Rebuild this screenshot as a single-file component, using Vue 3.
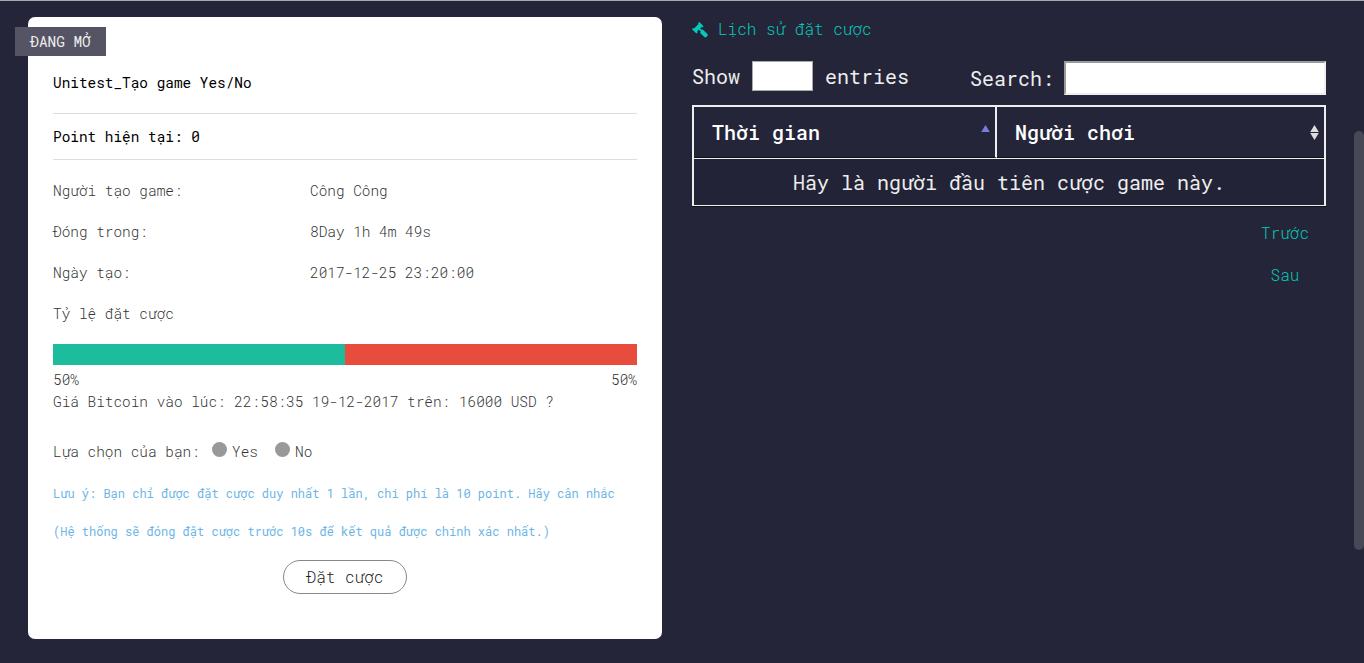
<script setup>
import { ref } from 'vue'

const details = [
  { label: 'Người tạo game:', value: 'Công Công' },
  { label: 'Đóng trong:', value: '8Day 1h 4m 49s' },
  { label: 'Ngày tạo:', value: '2017-12-25 23:20:00' },
  { label: 'Tỷ lệ đặt cược', value: '' },
]
const yesShare = 50
const choices = ['Yes', 'No']
const picked = ref('')
const query = ref('')
</script>

<template>
  <main class="page">
    <section class="card">
      <span class="badge">ĐANG MỞ</span>
      <h1 class="title">Unitest_Tạo game Yes/No</h1>
      <p class="points">Point hiện tại: 0</p>
      <dl class="details">
        <div v-for="row in details" :key="row.label" class="detail">
          <dt>{{ row.label }}</dt>
          <dd>{{ row.value }}</dd>
        </div>
      </dl>
      <div class="ratio">
        <div class="ratio-yes" :style="{ width: yesShare + '%' }"></div>
      </div>
      <div class="ratio-labels">
        <span>{{ yesShare }}%</span><span>{{ 100 - yesShare }}%</span>
      </div>
      <p class="question">Giá Bitcoin vào lúc: 22:58:35 19-12-2017 trên: 16000 USD ?</p>
      <div class="choices">
        <span class="choices-label">Lựa chọn của bạn:</span>
        <label v-for="c in choices" :key="c" class="choice" @click="picked = c">
          <i class="dot"></i>{{ c }}
        </label>
      </div>
      <p class="note">Lưu ý: Bạn chỉ được đặt cược duy nhất 1 lần, chi phí là 10 point. Hãy cân nhắc</p>
      <p class="note">(Hệ thống sẽ đóng đặt cược trước 10s để kết quả được chính xác nhất.)</p>
      <button class="bet">Đặt cược</button>
    </section>

    <section class="history">
      <h2 class="heading">
        <svg class="gavel" viewBox="0 0 16 16" aria-hidden="true">
          <path d="M0 7.2 L1.2 6 L2 6.4 L6.5 2 L6.1 1.2 L7.3 0 L11.5 4.2 L10.3 5.4 L9.5 5 L8.2 6.3 L10 8.1 L10.8 7.5 L15.4 12 Q16.2 13 15.4 14 L14.3 15.1 Q13.4 15.9 12.4 15.1 L8.2 10.9 L8.7 9.4 L6.9 7.6 L5.2 9.3 L5.6 10.2 L4.4 11.4 Z" />
        </svg>
        <span>Lịch sử đặt cược</span>
      </h2>
      <div class="controls">
        <div class="length">Show<span class="select"></span>entries</div>
        <label class="search">Search:<input v-model="query" type="text" class="search-input"></label>
      </div>
      <div class="table">
        <div class="thead">
          <div class="th">Thời gian<svg class="sort asc" viewBox="0 0 9 16"><path d="M4.5 0 L8.8 7 H0.2 Z" /></svg></div>
          <div class="th">Người chơi<svg class="sort" viewBox="0 0 9 16"><path d="M4.5 0 L8.8 7 H0.2 Z M0.2 8 H8.8 L4.5 15 Z" /></svg></div>
        </div>
        <div class="empty">Hãy là người đầu tiên cược game này.</div>
      </div>
      <nav class="pager">
        <a>Trước</a>
        <a>Sau</a>
      </nav>
    </section>
    <div class="scroll-thumb"></div>
  </main>
</template>

<style>
body {
  background: #25253a;
  overflow: hidden;
}
</style>

<style scoped>
* {
  box-sizing: border-box;
}
.page {
  position: relative;
  display: flex;
  gap: 30px;
  align-items: flex-start;
  height: 663px;
  padding: 16px 38px 0 28px;
  border-top: 1px solid #a9a9ad;
  background: #25253a;
  font-family: "Roboto Mono", "Liberation Mono", monospace;
  font-size: 14.4px;
  font-weight: 300;
  color: #333;
}
h1, h2, p, dl, dd {
  margin: 0;
  font-weight: inherit;
}
.card {
  position: relative;
  display: flex;
  flex-direction: column;
  width: 634px;
  height: 622px;
  padding: 36px 25px 0;
  border-radius: 7px;
  background: #fff;
}
.badge {
  position: absolute;
  left: -13px;
  top: 10px;
  width: 91px;
  height: 29px;
  line-height: 29px;
  text-align: center;
  font-weight: 400;
  background: #555465;
  color: #eee;
}
.title {
  height: 61px;
  line-height: 60px;
  font-size: 14.4px;
  font-weight: 400;
  color: #000;
  border-bottom: 1px solid #ddd;
}
.points {
  height: 46px;
  line-height: 46px;
  font-weight: 400;
  color: #000;
  border-bottom: 1px solid #ddd;
}
.details {
  padding-top: 10px;
}
.detail {
  display: grid;
  grid-template-columns: 257px 1fr;
  height: 41px;
  line-height: 41px;
}
.ratio {
  height: 21px;
  margin-top: 10px;
  background: #e84c3d;
}
.ratio-yes {
  height: 100%;
  background: #1dbc9c;
}
.ratio-labels {
  display: flex;
  justify-content: space-between;
  height: 26px;
  line-height: 30px;
}
.question {
  height: 22px;
  line-height: 22px;
}
.choices {
  display: flex;
  height: 22px;
  margin-top: 28px;
  line-height: 22px;
}
.choices-label {
  width: 159px;
}
.choice {
  display: flex;
  width: 63px;
}
.dot {
  width: 15px;
  height: 15px;
  margin: 1px 5px 0 0;
  border-radius: 50%;
  background: #999;
}
.note {
  height: 38px;
  line-height: 38px;
  font-size: 12px;
  font-weight: 400;
  white-space: nowrap;
  color: #6cb5e6;
}
.choices + .note {
  margin-top: 11px;
}
.bet {
  align-self: center;
  width: 124px;
  height: 34px;
  margin-top: 10px;
  padding: 0 0 2px;
  border: 1px solid #888;
  border-radius: 17px;
  background: transparent;
  font: 300 16px "Roboto Mono", "Liberation Mono", monospace;
  color: #222;
}
.history {
  width: 634px;
  color: #eee;
  font-size: 20px;
  font-weight: 400;
}
.heading {
  display: flex;
  align-items: center;
  gap: 10px;
  height: 26px;
  font-size: 16px;
  font-weight: 300;
  color: #04cbb9;
}
.heading span {
  padding-bottom: 4px;
}
.gavel {
  width: 16px;
  height: 16px;
  margin-bottom: 1px;
  fill: #04cbb9;
}
.controls {
  display: flex;
  justify-content: space-between;
  height: 34px;
  margin-top: 18px;
}
.length {
  display: flex;
  height: 30px;
  line-height: 30px;
}
.select {
  width: 61px;
  height: 30px;
  margin: 0 12px;
  border: 1px solid #a9a9a9;
  background: #fff;
}
.search {
  display: flex;
  line-height: 34px;
}
.search-input {
  width: 262px;
  height: 34px;
  margin-left: 10px;
  border: 2px solid;
  border-color: #9a9a9a #eee #eee #9a9a9a;
  background: #fff;
  outline: none;
}
.table {
  height: 101px;
  margin-top: 10px;
  border: 2px solid #eee;
  border-bottom-width: 1px;
  box-shadow: 0 1px #111118;
}
.thead {
  display: grid;
  grid-template-columns: 303px 1fr;
  height: 52px;
  border-bottom: 1px solid #eee;
  font-weight: 500;
  color: #fff;
}
.th {
  display: flex;
  justify-content: space-between;
  align-items: flex-start;
  padding: 0 5px 0 18px;
  line-height: 50px;
  border-bottom: 1px solid #111118;
}
.th:first-child {
  border-right: 2px solid #eee;
}
.sort {
  width: 9px;
  height: 16px;
  margin-top: 18px;
  fill: #ddd;
}
.asc {
  fill: #7b7bdc;
}
.empty {
  height: 46px;
  line-height: 46px;
  text-align: center;
  background: #232337;
}
.pager {
  display: flex;
  flex-direction: column;
  width: 82px;
  margin: 6px 0 0 auto;
  font-size: 16px;
  font-weight: 300;
  line-height: 42px;
  text-align: center;
  color: #04cbb9;
}
.scroll-thumb {
  position: absolute;
  right: 0;
  top: 130px;
  width: 10px;
  height: 419px;
  border-radius: 5px;
  background: #484957;
}
</style>
